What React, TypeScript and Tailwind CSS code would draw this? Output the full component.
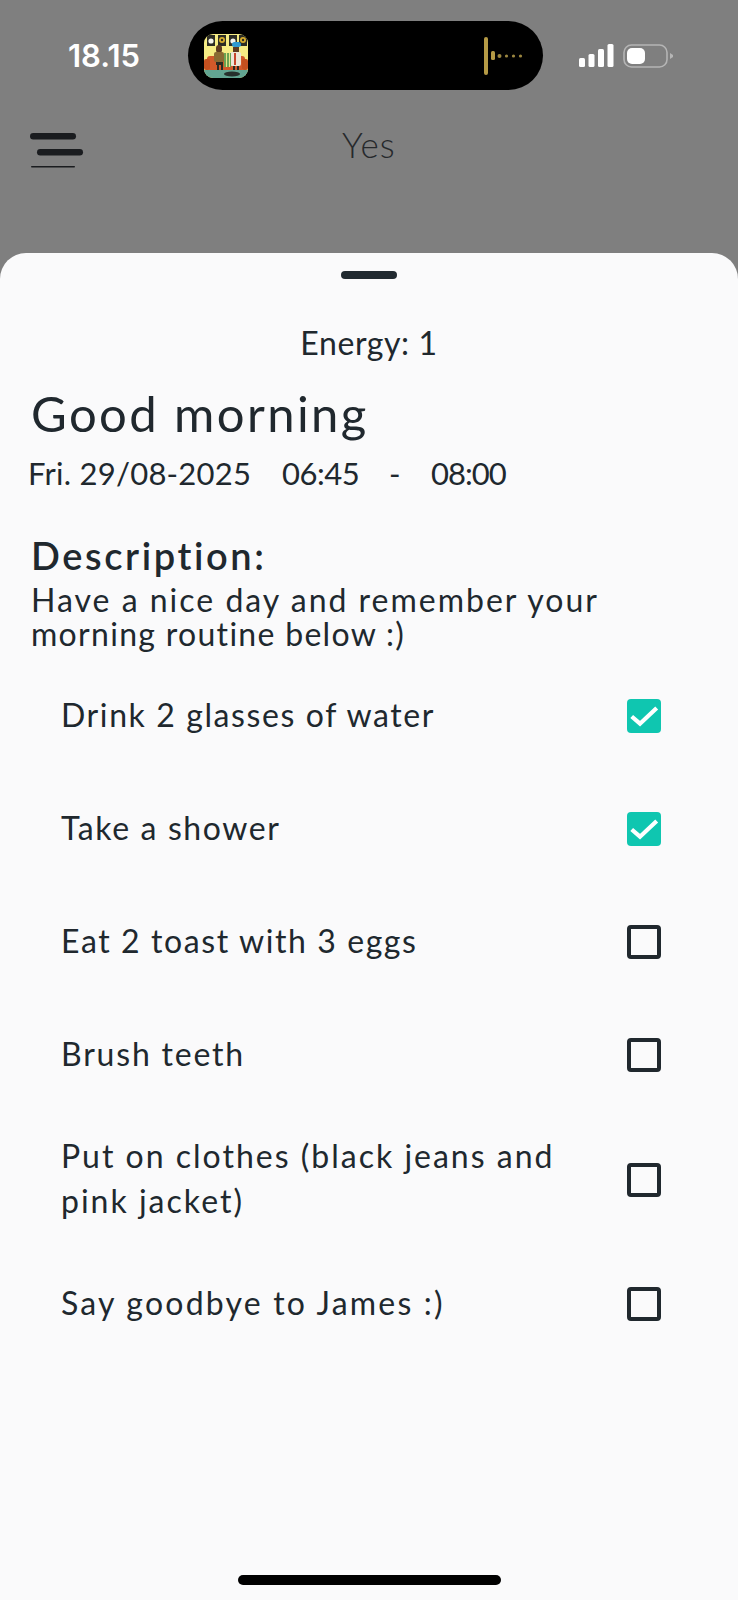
import React from 'react';

const tasks = [
  { label: 'Drink 2 glasses of water', done: true, spacing: 'tracking-[1.6px]' },
  { label: 'Take a shower', done: true, spacing: 'tracking-[1.6px]' },
  { label: 'Eat 2 toast with 3 eggs', done: false, spacing: 'tracking-[1.6px]' },
  { label: 'Brush teeth', done: false, spacing: 'tracking-[1.8px]' },
  { label: 'Put on clothes (black jeans and pink jacket)', done: false, spacing: 'tracking-[2px]' },
  { label: 'Say goodbye to James :)', done: false, spacing: 'tracking-[2.2px]' },
];

const AppIcon = () => (
  <svg width="44" height="44" viewBox="0 0 44 44" className="rounded-[9px]">
    <rect width="44" height="44" fill="#f6ec84" />
    {/* speakers along the wall */}
    <rect x="3" y="1" width="8" height="11" fill="#2c2c24" />
    <circle cx="7" cy="7" r="2.6" fill="#f4f4ec" />
    <rect x="14" y="1" width="8" height="11" fill="#2c2c24" />
    <circle cx="18" cy="6" r="3" fill="#d8ad2c" />
    <circle cx="18" cy="6" r="1.2" fill="#2c2c24" />
    <rect x="25" y="1" width="8" height="11" fill="#2c2c24" />
    <circle cx="29" cy="7" r="2.6" fill="#f4f4ec" />
    <rect x="35" y="1" width="8" height="11" fill="#2c2c24" />
    <circle cx="39" cy="6" r="3" fill="#d8ad2c" />
    <circle cx="39" cy="6" r="1.2" fill="#2c2c24" />
    {/* couch */}
    <rect x="3" y="22" width="38" height="14" rx="3" fill="#d1592a" />
    <rect x="0" y="25" width="6" height="11" rx="2" fill="#c4501f" />
    <rect x="38" y="25" width="6" height="11" rx="2" fill="#c4501f" />
    {/* left figure */}
    <rect x="12" y="11" width="6" height="8" rx="3" fill="#5d3a20" />
    <rect x="10" y="18" width="10" height="10" rx="2" fill="#8a6a33" />
    <rect x="12" y="28" width="7" height="3" fill="#2a2a22" />
    <rect x="13" y="31" width="2" height="6" fill="#2a2a22" />
    <rect x="17" y="31" width="2" height="6" fill="#2a2a22" />
    {/* right figure */}
    <rect x="28" y="8" width="9" height="5" rx="2.5" fill="#2f9ad0" />
    <rect x="29" y="13" width="6" height="5" fill="#5d3a20" />
    <rect x="26" y="18" width="11" height="14" rx="2" fill="#ece6d8" />
    <rect x="30" y="19" width="2" height="12" fill="#c8452c" />
    <rect x="29" y="32" width="2" height="5" fill="#2a2a22" />
    <rect x="33" y="32" width="2" height="5" fill="#2a2a22" />
    {/* table stack */}
    <rect x="20" y="19" width="7" height="14" fill="#6ba352" />
    <rect x="22" y="19" width="1" height="14" fill="#e8e48a" />
    <rect x="25" y="19" width="1" height="14" fill="#e8e48a" />
    {/* floor */}
    <rect y="36" width="44" height="8" fill="#62a592" />
    <ellipse cx="28" cy="40" rx="8" ry="2.5" fill="#26302c" />
  </svg>
);

const Waveform = () => (
  <svg width="40" height="38" viewBox="0 0 40 38">
    <rect x="0" y="0" width="4" height="38" rx="2" fill="#b59a45" />
    <rect x="7" y="14" width="4" height="9" rx="1.5" fill="#b59a45" />
    <circle cx="15.5" cy="19" r="2" fill="#9c8740" />
    <circle cx="22.5" cy="19" r="1.6" fill="#9c8740" />
    <circle cx="29.5" cy="19" r="1.6" fill="#9c8740" />
    <circle cx="36.5" cy="19" r="1.6" fill="#9c8740" />
  </svg>
);

const Signal = () => (
  <svg width="35" height="23" viewBox="0 0 35 23" fill="#fff">
    <rect x="0" y="14" width="6" height="9" rx="1.5" />
    <rect x="9.5" y="10" width="6" height="13" rx="1.5" />
    <rect x="19" y="5" width="6" height="18" rx="1.5" />
    <rect x="28.5" y="0" width="6" height="23" rx="1.5" />
  </svg>
);

const Battery = () => (
  <svg width="50" height="24" viewBox="0 0 50 24">
    <rect x="1" y="1" width="43" height="22" rx="7.5" fill="none" stroke="#b5b5b5" strokeWidth="1.6" />
    <rect x="4" y="4" width="18" height="16" rx="5" fill="#fff" />
    <path d="M47 9 L50 11 V13 L47 15 Z" fill="#b5b5b5" />
  </svg>
);

const MenuIcon = () => (
  <svg width="54" height="36" viewBox="0 0 54 36" fill="#1a1c1f">
    <rect x="0" y="0" width="46" height="6.5" rx="3.25" />
    <rect x="7" y="16" width="46" height="6.5" rx="3.25" />
    <rect x="1" y="33" width="44" height="1.5" rx="0.75" />
  </svg>
);

export default function App() {
  return (
    <div className="w-[738px] h-[1600px] flex flex-col bg-[#7f7f7f] text-[#20282e] overflow-hidden font-['Lato','Noto_Sans',sans-serif]">
      <div className="h-[253px] shrink-0">
        <div className="flex items-center pt-[21px] pl-[68px]">
          <span className="w-[120px] text-[31px] font-semibold leading-[69px] text-white font-['Inter',sans-serif]">18.15</span>
          <div className="w-[355px] h-[69px] bg-black rounded-full flex items-center justify-between pl-[16px] pr-[19px]">
            <AppIcon />
            <Waveform />
          </div>
          <div className="flex items-center ml-[36px] gap-[9px]">
            <Signal />
            <Battery />
          </div>
        </div>
        <div className="grid grid-cols-[1fr_auto_1fr] items-start px-[30px] mt-[43px]">
          <MenuIcon />
          <span className="text-[35px] font-light leading-[40px] tracking-[1.2px] text-[#26292c] -mt-[9px]">Yes</span>
        </div>
      </div>

      <div className="flex-1 flex flex-col bg-[#fafafb] rounded-t-[26px]">
        <div className="w-[56px] h-[8px] rounded-full bg-[#212a30] mx-auto mt-[18px]" />
        <p className="text-center text-[32px] leading-[40px] font-normal tracking-[0.6px] mt-[44px]">Energy: 1</p>
        <h1 className="pl-[31px] text-[49px] leading-[60px] font-normal tracking-[2.4px] mt-[20px]">Good morning</h1>
        <div className="flex pl-[28px] text-[31px] leading-[40px] font-normal mt-[10px]">
          <span className="w-[254px] tracking-[0.25px]">Fri. 29/08-2025</span>
          <span className="w-[107px] tracking-[-0.5px]">06:45</span>
          <span className="w-[42px]">-</span>
          <span className="tracking-[-1px]">08:00</span>
        </div>
        <h2 className="pl-[31px] text-[38px] leading-[46px] font-semibold tracking-[2.6px] mt-[39px]">Description:</h2>
        <p className="px-[31px] text-[32px] leading-[34px] mt-[5px]">
          <span className="block tracking-[2px]">Have a nice day and remember your</span>
          <span className="block tracking-[1.3px]">morning routine below :)</span>
        </p>
        <div className="flex flex-col mt-[7px]">
          {tasks.map((task) => (
            <div key={task.label} className="min-h-[113px] py-[23px] pl-[61px] pr-[77px] flex items-center justify-between">
              <span className={`w-[510px] text-[32px] leading-[45px] ${task.spacing}`}>{task.label}</span>
              {task.done ? (
                <span className="w-[34px] h-[34px] mt-[3px] rounded-[4px] bg-[#0fc6b0] flex items-center justify-center">
                  <svg width="34" height="34" viewBox="0 0 34 34" fill="none">
                    <path d="M4.7 17.5 L13 24.7 L29.7 9" stroke="#fff" strokeWidth="4.2" />
                  </svg>
                </span>
              ) : (
                <span className="w-[34px] h-[34px] mt-[3px] rounded-[4px] border-[4px] border-[#20282e]" />
              )}
            </div>
          ))}
        </div>
        <div className="mt-auto mb-[15px] mx-auto w-[263px] h-[10px] rounded-full bg-black" />
      </div>
    </div>
  );
}
